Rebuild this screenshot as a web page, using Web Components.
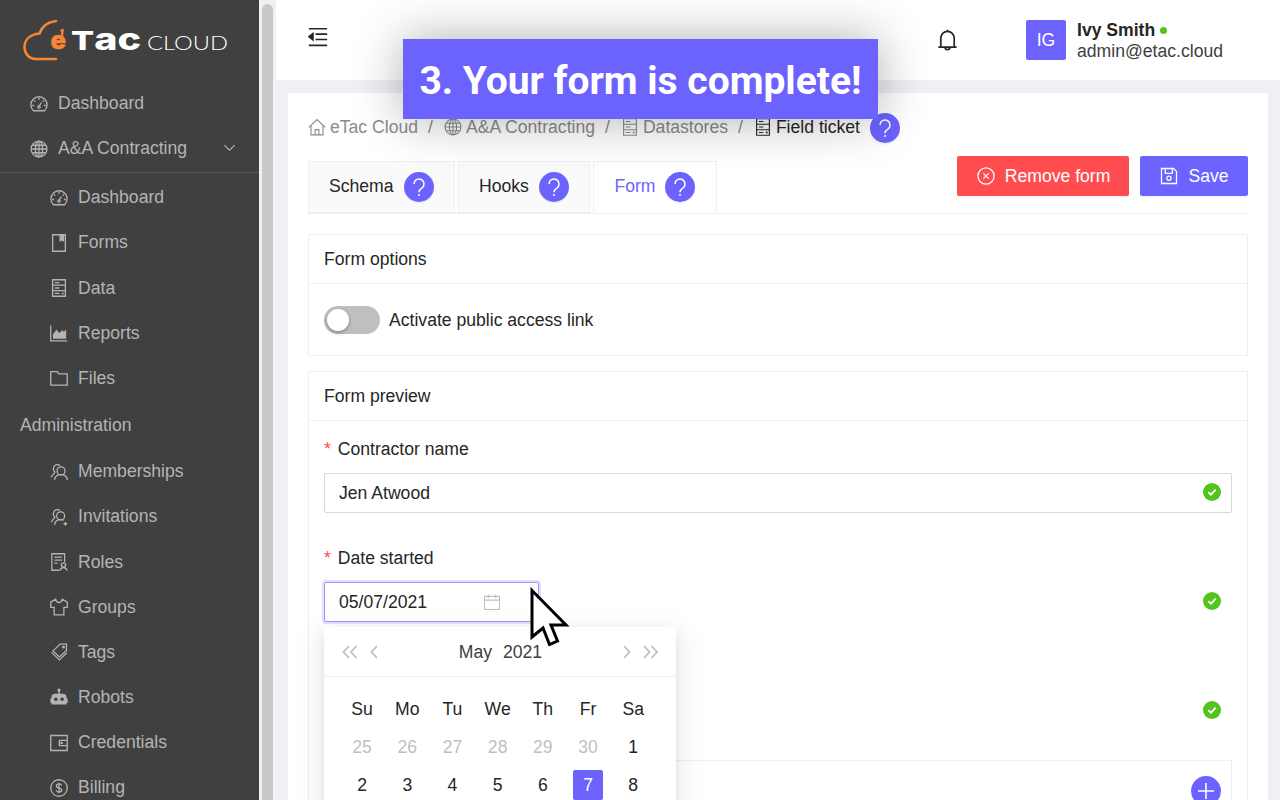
<!DOCTYPE html>
<html lang="en">
<head>
<meta charset="utf-8">
<title>eTac Cloud</title>
<style>
  html, body { margin: 0; height: 800px; overflow: hidden; background: #eef0f5; }
  body { font-family: "Liberation Sans", Arial, sans-serif; font-size: 17.6px; color: #262626; }
</style>
</head>
<body>
<app-shell></app-shell>

<script>
const ICONS = {
  dashboard: '<path d="M4.600 21a10.800 10.800 0 1 1 14.800 0z"/><path d="M12 15l3.400-5"/><circle cx="12" cy="16" r="1.600"/><path d="M12 3.800v2.500M5.400 7.400l1.700 1.400M18.600 7.400L17 8.800M3 14h2.500M18.500 14H21"/>',
  global: '<circle cx="12" cy="12" r="10.600"/><ellipse cx="12" cy="12" rx="4.800" ry="10.600"/><path d="M12 1.400v21.200M1.400 12h21.200M3 7h18M3 17h18"/>',
  book: '<path d="M3.500 1h17v22h-17z"/><path d="M13.500 1v8l2.300-1.800L18 9V1z" fill="currentColor"/>',
  data: '<path d="M3.500 1h17v22h-17zM3.500 8.300h17M3.500 15.600h17M6.500 4.700h6M6.500 12h6M6.500 19.300h6"/><circle cx="17" cy="19.300" r=".6"/>',
  chart: '<path d="M1 2v20.500h22"/><path d="M4 19.500v-6l4.500-6 4 4.500L16.500 8l2 2.500 3-3.500v12.500z" fill="currentColor" stroke="none"/>',
  folder: '<path d="M1 3.500h8.500l2.500 3h11v15H1z"/>',
  team: '<circle cx="14.700" cy="10.500" r="5.300"/><path d="M6 22.500c.5-4.500 4-7 8.700-7s8 2.500 8.500 7"/><path d="M13.500 3.500A5.300 5.300 0 0 0 5 5.500c-1 2.500-.2 5 1.500 6.500L1.500 19"/>',
  invite: '<circle cx="14.200" cy="10.500" r="5.300"/><path d="M6 22.500c.5-4.500 4-7 8.200-7 1.500 0 2.800.3 4 .9"/><path d="M13.500 3.500A5.300 5.300 0 0 0 5 5.500c-1 2.500-.2 5 1.500 6.500L1.500 19M20.500 18.500v5M18 21h5"/>',
  role: '<path d="M12.500 23H2.500V1h17v11"/><path d="M6 5.500h10M6 9.500h10M6 13.500h4"/><circle cx="18" cy="16" r="2.800"/><path d="M13.300 23.500c.3-2.600 2.100-4.100 4.700-4.100s4.400 1.500 4.700 4.100"/>',
  shirt: '<path d="M7.500 1.500L1 5.500v7h4.500v10h13v-10H23v-7l-6.500-4c-.8 3-2.500 4.800-4.500 4.800s-3.700-1.800-4.500-4.800z"/>',
  tag: '<path d="M13.500 1.500h8.500v8.500l-9.500 8.500-8.500-8z"/><circle cx="18" cy="5.500" r="1.100"/><path d="M2 12.500l10.500 10L22.500 13"/>',
  robot: '<circle cx="12" cy="2.800" r="2.100" fill="currentColor" stroke="none"/><path d="M11 4h2v4h-2z" fill="currentColor" stroke="none"/><path fill-rule="evenodd" stroke="none" fill="currentColor" d="M7 7.500h10a5 5 0 0 1 5 5v1.500h1.500v6H22v2H2v-2H.5v-6H2v-1.500a5 5 0 0 1 5-5zM7.800 12.500a2.400 2.400 0 1 0 0 4.800 2.400 2.400 0 0 0 0-4.800zm8.400 0a2.400 2.400 0 1 0 0 4.800 2.400 2.400 0 0 0 0-4.800z"/>',
  wallet: '<path d="M1 2h22v20H1z"/><path d="M23 8.500H12.500v7H23"/><circle cx="15.500" cy="12" r=".9"/>',
  dollar: '<circle cx="12" cy="12" r="11"/><path d="M15.500 8.800c-.4-1.500-1.700-2.200-3.500-2.200-2 0-3.500 1-3.500 2.700 0 3.800 7.200 1.700 7.200 5.500 0 1.700-1.600 2.700-3.700 2.700s-3.500-.9-3.800-2.500M12 5v14"/>',
  home: '<path d="M1 12.500L12 2l11 10.500"/><path d="M4 9.500V22.500h16V9.500"/><path d="M9.500 22.500v-7h5v7"/>',
  menu: '<path d="M1 2h22M9 8.500h14M9 15h14M1 22h22"/><path d="M1 11.700L6 8v7.500z" fill="currentColor"/>',
  bell: '<path d="M12 2.500a7 7 0 0 0-7 7v9.500h14V9.500a7 7 0 0 0-7-7zM2.500 19h19M12 .8v1.700M9.500 19a2.500 2.500 0 0 0 5 0"/>',
  xcircle: '<circle cx="12" cy="12" r="10.800"/><path d="M8.500 8.500l7 7M15.500 8.500l-7 7"/>',
  save: '<path d="M2 2h16l4 4v16H2z"/><path d="M7 2v6.500h9.500V2"/><circle cx="12" cy="15" r="2.800"/>',
  calendar: '<path d="M2 4.500h20v17.500H2zM2 9.500h20M7 2v5M17 2v5"/>',
  down: '<path d="M2.500 7.500l9.500 9.500 9.500-9.500"/>'
};

class AppIcon extends HTMLElement {
  connectedCallback() {
    const size = this.getAttribute('size') || 18;
    const sw = this.getAttribute('sw') || 1.7;
    this.attachShadow({ mode: 'open' });
    this.shadowRoot.innerHTML = `
      <style>
        :host { display: inline-flex; flex: none; }
        svg { display: block; }
      </style>
      <svg width="${size}" height="${size}" viewBox="0 0 24 24" fill="none" stroke="currentColor"
        stroke-width="${sw}">${ICONS[this.getAttribute('name')] || ''}</svg>`;
  }
}

class EtacLogo extends HTMLElement {
  connectedCallback() {
    this.attachShadow({ mode: 'open' });
    this.shadowRoot.innerHTML = `
      <style>:host { display: block; height: 81px; flex: none; } svg { display: block; }</style>
      <svg width="259" height="81" viewBox="0 0 259 81">
        <path d="M56 21c-8 1-14 5-16.500 12.500C31 34.500 24.500 39 24.500 47c0 7 5 12 11 12H56" fill="none" stroke="#f58634" stroke-width="2.600" stroke-linecap="round"/>
        <rect x="61" y="30.500" width="2.400" height="5" fill="#f58634"/>
        <circle cx="62.200" cy="30.500" r="1.800" fill="#f58634"/>
        <text x="50.500" y="49" font-family="Inter, sans-serif" font-weight="900" font-size="25" fill="#f58634" stroke="#f58634" stroke-width=".4" textLength="15.500" lengthAdjust="spacingAndGlyphs">e</text>
        <text x="71" y="50" font-family="Inter, sans-serif" font-weight="800" fill="#ffffff" textLength="70" lengthAdjust="spacingAndGlyphs"><tspan font-size="26">T</tspan><tspan font-size="30">ac</tspan></text>
        <text x="147" y="50" font-family="Lato, sans-serif" font-weight="300" font-size="20" fill="#ffffff" textLength="81" lengthAdjust="spacingAndGlyphs">CLOUD</text>
      </svg>`;
  }
}

class SideItem extends HTMLElement {
  connectedCallback() {
    const icon = this.getAttribute('icon');
    this.attachShadow({ mode: 'open' });
    this.shadowRoot.innerHTML = `
      <style>
        :host { display: flex; align-items: center; height: 45.140px; flex: none; gap: 10px; padding-left: 30px; color: #b4b4b4; }
        :host([sub]) { padding-left: 50px; }
        :host([heading]) { padding-left: 20px; height: 48.400px; }
        .chev { margin-left: auto; margin-right: 23px; margin-bottom: 2px; }
      </style>
      ${icon ? `<app-icon name="${icon}" size="18"></app-icon>` : ''}
      <slot></slot>
      ${this.hasAttribute('open') ? '<app-icon class="chev" name="down" size="13" sw="2"></app-icon>' : ''}`;
  }
}

class AppSidebar extends HTMLElement {
  connectedCallback() {
    this.attachShadow({ mode: 'open' });
    this.shadowRoot.innerHTML = `
      <style>
        :host { display: flex; flex-direction: column; width: 259px; height: 800px; overflow: hidden; background: #404040; flex: none; }
        hr { margin: 1px 0 2px; border: 0; border-top: 1px solid #5a5a5a; flex: none; width: 100%; }
      </style>
      <etac-logo></etac-logo>
      <side-item icon="dashboard">Dashboard</side-item>
      <side-item icon="global" open>A&amp;A Contracting</side-item>
      <hr>
      <side-item sub icon="dashboard">Dashboard</side-item>
      <side-item sub icon="book">Forms</side-item>
      <side-item sub icon="data">Data</side-item>
      <side-item sub icon="chart">Reports</side-item>
      <side-item sub icon="folder">Files</side-item>
      <side-item heading>Administration</side-item>
      <side-item sub icon="team">Memberships</side-item>
      <side-item sub icon="invite">Invitations</side-item>
      <side-item sub icon="role">Roles</side-item>
      <side-item sub icon="shirt">Groups</side-item>
      <side-item sub icon="tag">Tags</side-item>
      <side-item sub icon="robot">Robots</side-item>
      <side-item sub icon="wallet">Credentials</side-item>
      <side-item sub icon="dollar">Billing</side-item>`;
  }
}

class FakeScrollbar extends HTMLElement {
  connectedCallback() {
    this.attachShadow({ mode: 'open' });
    this.shadowRoot.innerHTML = `
      <style>
        :host { display: block; width: 17px; height: 800px; background: #f1f1f1; box-sizing: border-box; padding: 4px 3px 0; flex: none; }
        div { height: 796px; border-radius: 6px 6px 0 0; background: #c9c9c9; }
      </style>
      <div></div>`;
  }
}

class TopBar extends HTMLElement {
  connectedCallback() {
    this.attachShadow({ mode: 'open' });
    this.shadowRoot.innerHTML = `
      <style>
        :host { display: flex; align-items: center; height: 80px; background: #fff; padding: 0 58px 0 32px; flex: none; color: #262626; }
        .menu { margin-bottom: 6px; }
        .bell { margin-left: auto; margin-right: 67px; }
        .avatar { width: 40px; height: 40px; border-radius: 2px; background: #6c63ff; color: #fff; display: flex; align-items: center; justify-content: center; margin-right: 11px; }
        .who { line-height: 21px; padding-top: 2px; width: 145px; white-space: nowrap; }
        .name { font-weight: 700; display: flex; align-items: center; gap: 5px; }
        .dot { width: 7px; height: 7px; border-radius: 50%; background: #52c41a; }
        .mail { color: #404040; }
      </style>
      <app-icon class="menu" name="menu" size="20" sw="1.900"></app-icon>
      <app-icon class="bell" name="bell" size="23" sw="1.800"></app-icon>
      <div class="avatar">IG</div>
      <div class="who">
        <div class="name">Ivy Smith <span class="dot"></span></div>
        <div class="mail">admin@etac.cloud</div>
      </div>`;
  }
}

class HelpDot extends HTMLElement {
  connectedCallback() {
    this.attachShadow({ mode: 'open' });
    this.shadowRoot.innerHTML = `
      <style>
        :host { display: inline-flex; width: 30px; height: 30px; border-radius: 50%; background: #6c63ff; flex: none; box-shadow: 0 2px 0 rgba(0,0,0,.04); }
        svg { display: block; }
      </style>
      <svg width="30" height="30" viewBox="0 0 30 30" fill="none" stroke="#fff" stroke-width="1.500">
        <path d="M10 12a5 5 0 1 1 7.800 4.100c-1.900 1.200-2.800 2-2.800 4.100"/>
        <circle cx="15" cy="23" r="1" fill="#fff" stroke="none"/>
      </svg>`;
  }
}

class BreadCrumbs extends HTMLElement {
  connectedCallback() {
    this.attachShadow({ mode: 'open' });
    this.shadowRoot.innerHTML = `
      <style>
        :host { display: flex; align-items: center; height: 30px; box-sizing: border-box; padding-bottom: 2px; color: #8c8c8c; white-space: nowrap; flex: none; }
        app-icon { margin-right: 4px; }
        .sep { margin: 0 11px 0 10px; }
        .cur { color: #262626; display: flex; align-items: center; }
        .cur app-icon { margin-right: 4px; }
        help-dot { margin-left: 10px; margin-top: 2px; }
      </style>
      <app-icon name="home" size="18" sw="1.500"></app-icon>eTac Cloud<span class="sep">/</span>
      <app-icon name="global" size="18" sw="1.500"></app-icon>A&amp;A Contracting<span class="sep">/</span>
      <app-icon name="data" size="18" sw="1.500"></app-icon>Datastores<span class="sep">/</span>
      <span class="cur"><app-icon name="data" size="18" sw="1.500"></app-icon>Field ticket</span>
      <help-dot></help-dot>`;
  }
}

class TabItem extends HTMLElement {
  connectedCallback() {
    this.attachShadow({ mode: 'open' });
    this.shadowRoot.innerHTML = `
      <style>
        :host { display: flex; align-items: center; gap: 10px; height: 52px; box-sizing: border-box; background: #fafafa;
          border: 1px solid #f0f0f0; padding: 0 20px 2px; flex: none; }
        :host([active]) { background: #fff; color: #6c63ff; border-bottom-color: #fff; padding-right: 21px; }
        help-dot { margin-top: 2px; }
      </style>
      <slot></slot><help-dot></help-dot>`;
  }
}

class PrimaryButton extends HTMLElement {
  connectedCallback() {
    this.attachShadow({ mode: 'open' });
    this.shadowRoot.innerHTML = `
      <style>
        :host { display: flex; align-items: center; gap: 10px; height: 40px; box-sizing: border-box; padding: 0 19.500px 0 20px; border-radius: 2px;
          background: #6c63ff; color: #fff; box-shadow: 0 2px 0 rgba(0,0,0,.04); flex: none; }
        :host([danger]) { background: #ff4d4f; padding-right: 19px; }
      </style>
      <app-icon name="${this.getAttribute('icon')}" size="18"></app-icon><slot></slot>`;
  }
}

class FormCard extends HTMLElement {
  connectedCallback() {
    this.attachShadow({ mode: 'open' });
    this.shadowRoot.innerHTML = `
      <style>
        :host { display: block; border: 1px solid #f0f0f0; }
        .head { height: 49px; box-sizing: border-box; border-bottom: 1px solid #f0f0f0; display: flex; align-items: center; padding: 0 15px; }
        .body { padding: 15px; }
      </style>
      <div class="head">${this.getAttribute('heading')}</div>
      <div class="body"><slot></slot></div>`;
  }
}

class ToggleSwitch extends HTMLElement {
  connectedCallback() {
    this.attachShadow({ mode: 'open' });
    this.shadowRoot.innerHTML = `
      <style>
        :host { display: flex; align-items: center; gap: 9px; height: 28px; margin: 7px 0 6px; }
        .track { width: 56px; height: 28px; border-radius: 14px; background: #bfbfbf; position: relative; flex: none; }
        .knob { position: absolute; left: 3px; top: 3px; width: 22px; height: 22px; border-radius: 50%; background: #fff; box-shadow: 0 2px 4px rgba(0,35,11,.3); }
      </style>
      <div class="track"><div class="knob"></div></div><slot></slot>`;
  }
}

class FormField extends HTMLElement {
  connectedCallback() {
    this.attachShadow({ mode: 'open' });
    const label = this.getAttribute('label');
    this.shadowRoot.innerHTML = `
      <style>
        :host { display: block; height: 109px; }
        .label { height: 24px; margin-bottom: 12px; line-height: 24px; }
        .star { color: #ff4d4f; margin-right: 2px; }
        .ctl { position: relative; height: 40px; }
        .ok { position: absolute; right: 11px; top: 10px; width: 18px; height: 18px; }
      </style>
      <div class="label">${label ? `<span class="star">*</span> ${label}` : ''}</div>
      <div class="ctl">
        <slot></slot>
        <svg class="ok" viewBox="0 0 18 18"><circle cx="9" cy="9" r="9" fill="#52c41a"/><path d="M5.300 9.200l2.600 2.500 4.800-5" fill="none" stroke="#fff" stroke-width="1.800"/></svg>
      </div>`;
  }
}

class TextBox extends HTMLElement {
  connectedCallback() {
    this.attachShadow({ mode: 'open' });
    this.shadowRoot.innerHTML = `
      <style>
        :host { display: flex; align-items: center; height: 40px; box-sizing: border-box; border: 1px solid #d9d9d9; border-radius: 2px; padding: 0 14px; background: #fff; }
      </style>
      <slot></slot>`;
  }
}

class DatePicker extends HTMLElement {
  connectedCallback() {
    this.attachShadow({ mode: 'open' });
    const prev = [25, 26, 27, 28, 29, 30].map(d => `<span class="off">${d}</span>`).join('');
    const days = [1, 2, 3, 4, 5, 6, 7, 8].map(d => `<span class="${d === 7 ? 'sel' : ''}">${d}</span>`).join('');
    const week = ['Su', 'Mo', 'Tu', 'We', 'Th', 'Fr', 'Sa'].map(d => `<span>${d}</span>`).join('');
    this.shadowRoot.innerHTML = `
      <style>
        :host { display: block; position: relative; width: 215px; height: 40px; }
        .box { display: flex; align-items: center; justify-content: space-between; height: 40px; box-sizing: border-box; padding: 0 37px 0 14px;
          border: 1px solid #9d97ff; border-radius: 2px; box-shadow: 0 0 0 2px rgba(108,99,255,.2); background: #fff; }
        .cal { color: #bfbfbf; }
        .pop { position: absolute; left: 0; top: 45px; width: 352px; background: #fff; border-radius: 2px; z-index: 5; padding-bottom: 80px;
          box-shadow: 0 3px 6px -4px rgba(0,0,0,.12), 0 6px 16px rgba(0,0,0,.08), 0 9px 28px 8px rgba(0,0,0,.05); }
        .head { display: flex; align-items: center; height: 50px; border-bottom: 1px solid #f0f0f0; padding: 0 17px 0 18px; color: #404040; box-sizing: border-box; }
        .head .t { flex: 1; text-align: center; padding-top: 2px; word-spacing: 6px; }
        .nav { color: #bfbfbf; display: flex; gap: 12px; align-items: center; width: 40px; flex: none; }
        .nav.r { justify-content: flex-end; }
        .grid { display: grid; grid-template-columns: repeat(7, 45.200px); padding: 12px 15.500px 0; grid-template-rows: 39.500px; grid-auto-rows: 37.500px; align-items: center; justify-items: center; }
        .grid span { width: 30px; height: 30px; line-height: 30px; text-align: center; border-radius: 2px; }
        .off { color: #bfbfbf; }
        .sel { background: #6c63ff; color: #fff; }
      </style>
      <div class="box"><span>05/07/2021</span><app-icon class="cal" name="calendar" size="18" sw="1.400"></app-icon></div>
      <div class="pop">
        <div class="head">
          <div class="nav">
            <svg width="16" height="14" viewBox="0 0 16 14" fill="none" stroke="currentColor" stroke-width="1.800"><path d="M7 1L1.500 7 7 13M14.500 1L9 7l5.500 6"/></svg>
            <svg width="8" height="14" viewBox="0 0 8 14" fill="none" stroke="currentColor" stroke-width="1.800"><path d="M7 1L1.500 7 7 13"/></svg>
          </div>
          <div class="t">May 2021</div>
          <div class="nav r">
            <svg width="8" height="14" viewBox="0 0 8 14" fill="none" stroke="currentColor" stroke-width="1.800"><path d="M1 1l5.500 6L1 13"/></svg>
            <svg width="16" height="14" viewBox="0 0 16 14" fill="none" stroke="currentColor" stroke-width="1.800"><path d="M1 1l5.500 6L1 13M8.500 1L14 7l-5.500 6"/></svg>
          </div>
        </div>
        <div class="grid">${week}${prev}${days}</div>
      </div>`;
  }
}

class PointerCursor extends HTMLElement {
  connectedCallback() {
    this.attachShadow({ mode: 'open' });
    this.shadowRoot.innerHTML = `
      <style>:host { position: absolute; left: 528px; top: 586px; z-index: 20; display: block; width: 44px; height: 64px; } svg { display: block; }</style>
      <svg width="44" height="64" viewBox="528 586 44 64">
        <path d="M532 590.500L566 625H551l6.500 16-8 3.500-6.500-16.500-11 9z" fill="#fff" stroke="#000" stroke-width="3" stroke-linejoin="miter"/>
      </svg>`;
  }
}

class StepBanner extends HTMLElement {
  connectedCallback() {
    this.attachShadow({ mode: 'open' });
    this.shadowRoot.innerHTML = `
      <style>
        :host { position: absolute; left: 403px; top: 39px; width: 475px; height: 80px; z-index: 10; display: flex; align-items: center; justify-content: center;
          box-sizing: border-box; padding-top: 4px;
          background: #6c63ff; color: #fff; font: 700 39px Roboto, sans-serif; box-shadow: 0 0 50px rgba(0,0,0,.32); white-space: nowrap; }
      </style>
      <slot></slot>`;
  }
}

class FormPage extends HTMLElement {
  connectedCallback() {
    this.attachShadow({ mode: 'open' });
    this.shadowRoot.innerHTML = `
      <style>
        :host { display: block; margin: 13px 12px 0; background: #fff; padding: 20px 20px 0; flex: 1; min-height: 0; overflow: hidden; }
        .tabs { display: flex; align-items: flex-end; gap: 3.500px; margin-top: 18px; border-bottom: 1px solid #f0f0f0; height: 52px; position: relative; }
        .actions { margin-left: auto; display: flex; gap: 11px; align-self: flex-start; margin-top: -5px; }
        form-card { margin-top: 20px; }
        form-card + form-card { margin-top: 15px; }
        form-field:last-of-type { height: 105px; }
        .repeat { height: 60px; border: 1px solid #f0f0f0; display: flex; justify-content: flex-end; padding: 15px 10px 0 0; box-sizing: border-box; }
        .plus { width: 30px; height: 30px; border-radius: 50%; background: #6c63ff; color: #fff; display: flex; align-items: center; justify-content: center; }
        .first { margin-top: 1px; }
      </style>
      <bread-crumbs></bread-crumbs>
      <div class="tabs">
        <tab-item>Schema</tab-item>
        <tab-item>Hooks</tab-item>
        <tab-item active>Form</tab-item>
        <div class="actions">
          <primary-button danger icon="xcircle">Remove form</primary-button>
          <primary-button icon="save">Save</primary-button>
        </div>
      </div>
      <form-card heading="Form options">
        <toggle-switch>Activate public access link</toggle-switch>
      </form-card>
      <form-card heading="Form preview">
        <form-field class="first" label="Contractor name"><text-box>Jen Atwood</text-box></form-field>
        <form-field label="Date started"><date-picker></date-picker></form-field>
        <form-field></form-field>
        <div class="repeat">
          <div class="plus"><svg width="18" height="18" viewBox="0 0 18 18" fill="none" stroke="#fff" stroke-width="1.600"><path d="M9 1v16M1 9h16"/></svg></div>
        </div>
      </form-card>`;
  }
}

class AppShell extends HTMLElement {
  connectedCallback() {
    this.attachShadow({ mode: 'open' });
    this.shadowRoot.innerHTML = `
      <style>
        :host { display: flex; width: 1280px; height: 800px; position: relative; overflow: hidden; }
        main { flex: 1; min-width: 0; height: 800px; display: flex; flex-direction: column; background: #eef0f5; }
      </style>
      <app-sidebar></app-sidebar>
      <fake-scrollbar></fake-scrollbar>
      <main>
        <top-bar></top-bar>
        <form-page></form-page>
      </main>
      <step-banner>3. Your form is complete!</step-banner>
      <pointer-cursor></pointer-cursor>`;
  }
}

customElements.define('app-icon', AppIcon);
customElements.define('etac-logo', EtacLogo);
customElements.define('side-item', SideItem);
customElements.define('app-sidebar', AppSidebar);
customElements.define('fake-scrollbar', FakeScrollbar);
customElements.define('top-bar', TopBar);
customElements.define('help-dot', HelpDot);
customElements.define('bread-crumbs', BreadCrumbs);
customElements.define('tab-item', TabItem);
customElements.define('primary-button', PrimaryButton);
customElements.define('form-card', FormCard);
customElements.define('toggle-switch', ToggleSwitch);
customElements.define('form-field', FormField);
customElements.define('text-box', TextBox);
customElements.define('date-picker', DatePicker);
customElements.define('pointer-cursor', PointerCursor);
customElements.define('step-banner', StepBanner);
customElements.define('form-page', FormPage);
customElements.define('app-shell', AppShell);
</script>
</body>
</html>
